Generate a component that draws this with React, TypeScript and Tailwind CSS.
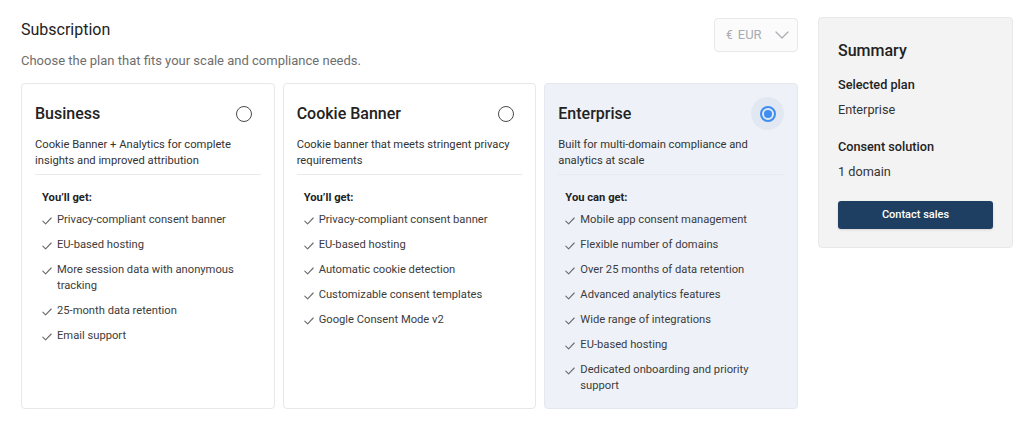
import React from "react";

type Plan = {
  id: string;
  name: string;
  description: string;
  heading: string;
  features: string[];
};

const plans: Plan[] = [
  {
    id: "business",
    name: "Business",
    description: "Cookie Banner + Analytics for complete insights and improved attribution",
    heading: "You’ll get:",
    features: [
      "Privacy-compliant consent banner",
      "EU-based hosting",
      "More session data with anonymous tracking",
      "25-month data retention",
      "Email support",
    ],
  },
  {
    id: "cookie",
    name: "Cookie Banner",
    description: "Cookie banner that meets stringent privacy requirements",
    heading: "You’ll get:",
    features: [
      "Privacy-compliant consent banner",
      "EU-based hosting",
      "Automatic cookie detection",
      "Customizable consent templates",
      "Google Consent Mode v2",
    ],
  },
  {
    id: "enterprise",
    name: "Enterprise",
    description: "Built for multi-domain compliance and analytics at scale",
    heading: "You can get:",
    features: [
      "Mobile app consent management",
      "Flexible number of domains",
      "Over 25 months of data retention",
      "Advanced analytics features",
      "Wide range of integrations",
      "EU-based hosting",
      "Dedicated onboarding and priority support",
    ],
  },
];

const Check = () => (
  <svg width="10" height="8" viewBox="0 0 10 8" fill="none" className="shrink-0 mt-[5px]">
    <path d="M0.8 4.2 L3.6 6.8 L9.2 1" stroke="#6b6b6b" strokeWidth="1.1" strokeLinecap="round" strokeLinejoin="round" />
  </svg>
);

const Radio = ({ selected }: { selected: boolean }) => (
  <div
    className={`w-[33px] h-[33px] rounded-full flex items-center justify-center shrink-0 ${
      selected ? "bg-[#e1e8f2]" : ""
    }`}
  >
    {selected ? (
      <div className="w-[16px] h-[16px] rounded-full border-[2px] border-[#3d8ef0] flex items-center justify-center">
        <div className="w-[8px] h-[8px] rounded-full bg-[#3d8ef0]" />
      </div>
    ) : (
      <div className="w-[16px] h-[16px] rounded-full border-[1.5px] border-[#4a4a4a]" />
    )}
  </div>
);

const PlanCard = ({ plan, selected }: { plan: Plan; selected: boolean }) => (
  <div
    className={`rounded-[4px] border px-[13px] pt-[13px] pb-[14px] ${
      selected ? "bg-[#eef2f8] border-[#e3e8ef]" : "bg-white border-[#e6e8ec]"
    }`}
  >
    <div className="flex items-center justify-between h-[33px]">
      <h3 className="text-[16px] leading-[24px] font-medium text-[#222]">{plan.name}</h3>
      <Radio selected={selected} />
    </div>
    <p className="mt-[7px] pb-[5px] border-b border-[#e8eaee] text-[11.2px] leading-[16px] text-[#333]">
      {plan.description}
    </p>
    <div className="pl-[7px] pt-[15px]">
      <h4 className="text-[11.2px] leading-[16px] font-bold text-[#222]">{plan.heading}</h4>
      <ul className="mt-[6px] flex flex-col gap-[9px]">
        {plan.features.map((f) => (
          <li key={f} className="flex items-start gap-[5px] text-[11.2px] leading-[16px] text-[#3c3c3c]">
            <Check />
            <span>{f}</span>
          </li>
        ))}
      </ul>
    </div>
  </div>
);

export default function App() {
  return (
    <div className="w-[1024px] h-[421px] bg-white pl-[21px] pr-[11px] pt-[17px] flex gap-[20px] font-['Roboto',sans-serif]">
      <div className="w-[777px] shrink-0">
        <div className="flex justify-between items-start">
          <div className="pt-[1px]">
            <h2 className="text-[16px] leading-[24px] text-[#222]">Subscription</h2>
            <p className="mt-[9px] text-[13px] leading-[20px] text-[#6e6e6e]">
              Choose the plan that fits your scale and compliance needs.
            </p>
          </div>
          <div className="mt-[1px] w-[84px] h-[34px] rounded-[4px] border border-[#e6e8ec] bg-[#fbfbfc] flex items-center pl-[11px] pr-[8px] text-[13px] text-[#a8abb0]">
            <span className="text-[12px]">€</span>
            <span className="ml-[5px]">EUR</span>
            <svg width="14" height="8" viewBox="0 0 14 8" fill="none" className="ml-auto">
              <path d="M1 1 L7 7 L13 1" stroke="#a8abb0" strokeWidth="1.2" strokeLinecap="round" strokeLinejoin="round" />
            </svg>
          </div>
        </div>
        <div className="mt-[12px] grid grid-cols-3 gap-[8px] h-[326px]">
          {plans.map((p) => (
            <PlanCard key={p.id} plan={p} selected={p.id === "enterprise"} />
          ))}
        </div>
      </div>
      <div className="self-start w-[195px] shrink-0 rounded-[4px] border border-[#e8e8e8] bg-[#f3f3f3] px-[19px] pt-[21px] pb-[18px]">
        <h3 className="text-[16px] leading-[24px] font-medium text-[#222]">Summary</h3>
        <div className="mt-[12px] text-[12.7px] leading-[20px] font-medium text-[#222]">Selected plan</div>
        <div className="mt-[5px] text-[12.7px] leading-[20px] text-[#333]">Enterprise</div>
        <div className="mt-[17px] text-[12.7px] leading-[20px] font-medium text-[#222]">Consent solution</div>
        <div className="mt-[5px] text-[12.7px] leading-[20px] text-[#333]">1 domain</div>
        <button className="mt-[19px] w-full h-[28px] rounded-[3px] bg-[#1e3f61] text-white text-[11px] font-medium shadow-sm">
          Contact sales
        </button>
      </div>
    </div>
  );
}
